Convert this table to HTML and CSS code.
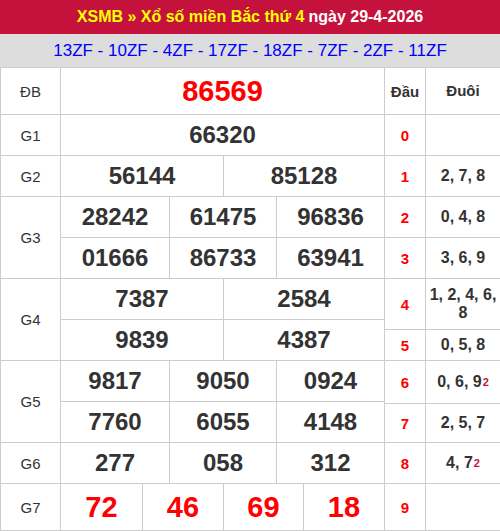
FILE: index.html
```html
<!DOCTYPE html>
<html lang="vi">
<head>
<meta charset="utf-8">
<title>XSMB</title>
<link rel="stylesheet" href="styles.css">
</head>
<body>
<div class="title"><span class="yl">XSMB » Xổ số miền Bắc thứ 4</span> ngày 29-4-2026</div>
<div class="codes">13ZF - 10ZF - 4ZF - 17ZF - 18ZF - 7ZF - 2ZF - 11ZF</div>
<div class="board">
  <div class="prizes">
    <div class="row r47"><div class="lbl">ĐB</div><div class="cells c1"><div class="n db">86569</div></div></div>
    <div class="row"><div class="lbl">G1</div><div class="cells c1"><div class="n">66320</div></div></div>
    <div class="row"><div class="lbl">G2</div><div class="cells c2"><div class="n">56144</div><div class="n">85128</div></div></div>
    <div class="row"><div class="lbl">G3</div>
      <div class="stack">
        <div class="cells c3"><div class="n">28242</div><div class="n">61475</div><div class="n">96836</div></div>
        <div class="cells c3"><div class="n">01666</div><div class="n">86733</div><div class="n">63941</div></div>
      </div>
    </div>
    <div class="row"><div class="lbl">G4</div>
      <div class="stack">
        <div class="cells c2"><div class="n">7387</div><div class="n">2584</div></div>
        <div class="cells c2"><div class="n">9839</div><div class="n">4387</div></div>
      </div>
    </div>
    <div class="row"><div class="lbl">G5</div>
      <div class="stack">
        <div class="cells c3"><div class="n">9817</div><div class="n">9050</div><div class="n">0924</div></div>
        <div class="cells c3"><div class="n">7760</div><div class="n">6055</div><div class="n">4148</div></div>
      </div>
    </div>
    <div class="row"><div class="lbl">G6</div><div class="cells c3"><div class="n">277</div><div class="n">058</div><div class="n">312</div></div></div>
    <div class="row r47"><div class="lbl">G7</div><div class="cells c4"><div class="n db">72</div><div class="n db">46</div><div class="n db">69</div><div class="n db">18</div></div></div>
  </div>
  <div class="loto">
    <div class="lrow h47"><div class="dau hd">Đầu</div><div class="duoi hd">Đuôi</div></div>
    <div class="lrow"><div class="dau">0</div><div class="duoi"></div></div>
    <div class="lrow"><div class="dau">1</div><div class="duoi">2, 7, 8</div></div>
    <div class="lrow"><div class="dau">2</div><div class="duoi">0, 4, 8</div></div>
    <div class="lrow"><div class="dau">3</div><div class="duoi">3, 6, 9</div></div>
    <div class="lrow h51"><div class="dau">4</div><div class="duoi">1, 2, 4, 6, 8</div></div>
    <div class="lrow h31"><div class="dau">5</div><div class="duoi">0, 5, 8</div></div>
    <div class="lrow h43"><div class="dau">6</div><div class="duoi">0, 6, 9<sup>2</sup></div></div>
    <div class="lrow h39"><div class="dau">7</div><div class="duoi">2, 5, 7</div></div>
    <div class="lrow"><div class="dau">8</div><div class="duoi">4, 7<sup>2</sup></div></div>
    <div class="lrow h47"><div class="dau">9</div><div class="duoi"></div></div>
  </div>
</div>
</body>
</html>
```
FILE: styles.css
```css
* { box-sizing: border-box; }
body {
  margin: 0;
  font-family: "Liberation Sans", Arial, sans-serif;
  color: #333;
  background: #fff;
}
.title {
  height: 34px;
  background: #c4123c;
  color: #fff;
  font-weight: bold;
  font-size: 16px;
  display: flex;
  align-items: center;
  justify-content: center;
}
.title .yl { color: #ff0; margin-right: 4px; }
.codes {
  height: 34px;
  background: #ddd;
  border-bottom: 1px solid #ccc;
  color: #00f;
  font-size: 17px;
  display: flex;
  align-items: center;
  justify-content: center;
  padding-top: 1px;
}
.board {
  display: flex;
  border-left: 1px solid #ccc;
}
.prizes { width: 384px; display: flex; flex-direction: column; }
.row { display: flex; }
.lbl {
  width: 60px;
  flex: none;
  border-right: 1px solid #ccc;
  border-bottom: 1px solid #ccc;
  display: flex;
  align-items: center;
  justify-content: center;
  font-size: 15px;
}
.stack { flex: 1; display: flex; flex-direction: column; }
.cells { flex: 1; display: grid; height: 41px; }
.stack .cells { flex: none; }
.r47 .cells { height: 47px; }
.c1 { grid-template-columns: 324px; }
.c2 { grid-template-columns: 163px 161px; }
.c3 { grid-template-columns: 109px 107px 108px; }
.c4 { grid-template-columns: 82px 81px 80px 81px; }
.n {
  border-right: 1px solid #ccc;
  border-bottom: 1px solid #ccc;
  display: flex;
  align-items: center;
  justify-content: center;
  font-size: 24px;
  font-weight: bold;
  color: #333;
}
.n.db { color: #f00; font-size: 29px; }
.loto { width: 116px; display: flex; flex-direction: column; }
.lrow { display: flex; height: 41px; }
.lrow.h47 { height: 47px; }
.lrow.h51 { height: 51px; }
.lrow.h31 { height: 31px; }
.lrow.h43 { height: 43px; }
.lrow.h39 { height: 39px; }
.dau, .duoi {
  border-right: 1px solid #ccc;
  border-bottom: 1px solid #ccc;
  display: flex;
  align-items: center;
  justify-content: center;
  text-align: center;
  font-weight: bold;
}
.dau { width: 41px; color: #f00; font-size: 15px; }
.duoi { width: 75px; font-size: 16px; line-height: 18px; padding: 0 2px; }
.hd { color: #333; font-size: 15px; }
sup { color: #c4123c; font-size: 11px; line-height: 0; vertical-align: 6px; margin-left: 1px; }
```
